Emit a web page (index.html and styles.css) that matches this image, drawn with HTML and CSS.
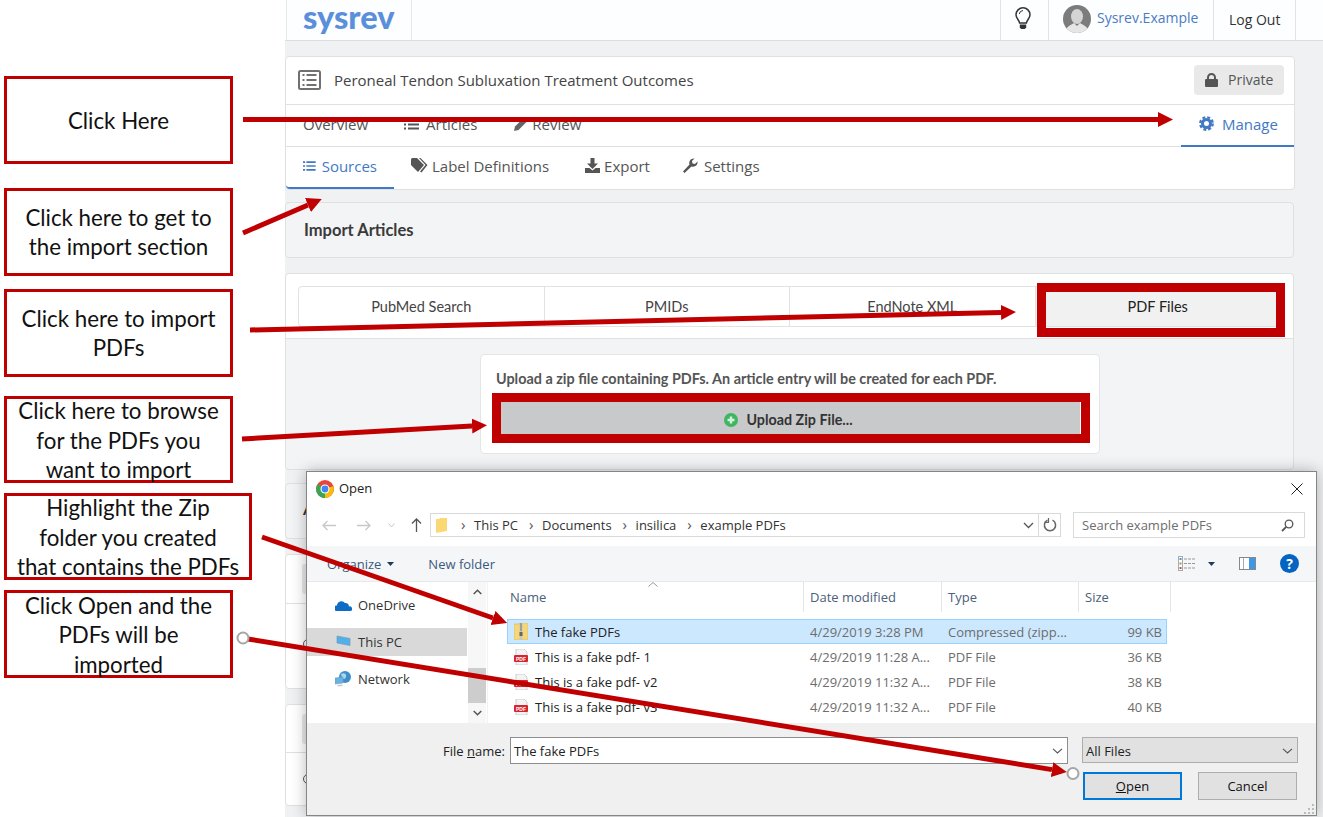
FILE: index.html
```html
<!DOCTYPE html>
<html lang="en">

<head>
    <meta charset="UTF-8">
    <meta name="viewport" content="width=device-width, initial-scale=1.0">
    <title>Import PDFs</title>
    <link rel="stylesheet" href="styles.css">
</head>

<body>
    <div id="page">
        <!-- callouts on the left -->
        <div id="notes">
            <div class="note n1">Click Here</div>
            <div class="note n2">Click here to get to the import section</div>
            <div class="note n3">Click here to import PDFs</div>
            <div class="note n4">Click here to browse for the PDFs you want to import</div>
            <div class="note n5">Highlight the Zip<br>folder you created<br>that contains the PDFs</div>
            <div class="note n6">Click Open and the PDFs will be imported</div>
        </div>

        <!-- the site behind the dialog -->
        <div id="app">
            <div class="navbar">
                <div class="logo">sysrev</div>
                <div class="spacer"></div>
                <div class="cell bulb">
                    <svg width="16" height="24" viewBox="0 0 16 24"><path d="M4.6 16C4.2 13 1 11.500 1 7.800A7 7 0 0 1 15 7.800C15 11.500 11.800 13 11.400 16Z" fill="none" stroke="#333" stroke-width="1.500"/><path d="M8 3.500A4 4 0 0 0 4.300 7" fill="none" stroke="#333"/><path d="M4.800 17.500H11.200V20.500L9.800 22H6.200L4.800 20.500Z" fill="#333"/></svg>
                </div>
                <div class="cell user">
                    <svg class="avatar" width="28" height="28" viewBox="0 0 28 28"><defs><clipPath id="round"><circle cx="14" cy="14" r="14"/></clipPath></defs><g clip-path="url(#round)"><rect width="28" height="28" fill="#7c7c7c"/><ellipse cx="14" cy="11.500" rx="6" ry="7.500" fill="#d4d4d4"/><path d="M2 28C3 21 8 20 11 18L14 21L17 18C20 20 25 21 26 28Z" fill="#e6e6e6"/></g></svg>
                    <span class="username">Sysrev.Example</span>
                </div>
                <div class="cell logout">Log Out</div>
            </div>

            <div class="main">
                <div class="card project">
                    <div class="title-row">
                        <svg width="23" height="20" viewBox="0 0 23 20"><rect x="1" y="1" width="21" height="18" rx="1.500" fill="none" stroke="#707070" stroke-width="2"/><path d="M4.500 5H6.500M8.500 5H18.500M4.500 10H6.500M8.500 10H18.500M4.500 15H6.500M8.500 15H18.500" stroke="#707070" stroke-width="2"/></svg>
                        <span class="project-name">Peroneal Tendon Subluxation Treatment Outcomes</span>
                        <span class="private">
                            <svg width="13" height="14" viewBox="0 0 13 14"><path d="M3 6V4.500A3.500 3.500 0 0 1 10 4.500V6" fill="none" stroke="#555" stroke-width="2"/><rect y="6" width="13" height="8" rx="1" fill="#555"/></svg>
                            Private
                        </span>
                    </div>
                    <div class="tab-row top">
                        <span class="tab">Overview</span>
                        <span class="tab articles">
                            <svg width="15" height="11" viewBox="0 0 15 11"><path d="M0 1.500H2M4 1.500H15M0 5.500H2M4 5.500H15M0 9.500H2M4 9.500H15" stroke="#555" stroke-width="1.800"/></svg>
                            <span class="after-articles">Articles</span>
                        </span>
                        <span class="tab review">
                            <svg width="14" height="14" viewBox="0 0 14 14"><path d="M0 14L1 9.500L9.500 1L13 4.500L4.500 13Z" fill="#666"/><path d="M10.500 0L14 3.500" stroke="#666" stroke-width="1.500"/></svg>
                            <span class="after-small">Review</span>
                        </span>
                        <span class="tab manage">
                            <svg width="15" height="15" viewBox="0 0 15 15"><circle cx="7.500" cy="7.500" r="4" fill="none" stroke="#4279c4" stroke-width="3"/><circle cx="7.500" cy="7.500" r="6.200" fill="none" stroke="#4279c4" stroke-width="2.400" stroke-dasharray="2.900 1.970"/></svg>
                            <span class="after-icon">Manage</span>
                        </span>
                    </div>
                    <div class="tab-row sub">
                        <span class="tab sources">
                            <svg width="15" height="12" viewBox="0 0 15 12"><path d="M0 1.500H2.500M4 1.500H15M0 6H2.500M4 6H15M0 10.500H2.500M4 10.500H15" stroke="#4279c4" stroke-width="2"/></svg>
                            <span class="after-sources">Sources</span>
                        </span>
                        <span class="tab">
                            <svg width="18" height="15" viewBox="0 0 18 15"><path d="M0 1.500A1.500 1.500 0 0 1 1.500 0H6L13 7L7 14L0 7ZM8 0H9.500L16.500 7L10.500 14.500L9 13.500L14.500 7Z" fill="#555"/></svg>
                            <span class="after-tag">Label Definitions</span>
                        </span>
                        <span class="tab export">
                            <svg width="15" height="15" viewBox="0 0 15 15"><path d="M5.500 0H9.500V5.500H13L7.500 11L2 5.500H5.500Z" fill="#555"/><path d="M0 10H4.500L7.500 12.500L10.500 10H15V15H0Z" fill="#555"/></svg>
                            <span class="after-small">Export</span>
                        </span>
                        <span class="tab settings">
                            <svg width="15" height="15" viewBox="0 0 15 15"><path d="M1.500 15L0 13.500L6.500 6.500C5.500 3 8 0 11.500 .500L9 3L9.500 5.500L12 6L14.500 3.500C15 7 12 9.500 8.500 8.500Z" fill="#555"/></svg>
                            <span class="after-wrench">Settings</span>
                        </span>
                    </div>
                </div>

                <div class="panel import-head">Import Articles</div>

                <div class="panel import-box">
                    <div class="source-wrap">
                        <div class="source-tabs">
                            <div class="source">PubMed Search</div>
                            <div class="source">PMIDs</div>
                            <div class="source">EndNote XML</div>
                            <div class="source active">PDF Files</div>
                        </div>
                    </div>
                    <div class="zip-area">
                        <div class="zip-box">
                            <p class="zip-text">Upload a zip file containing PDFs. An article entry will be created for each PDF.</p>
                            <div class="zip-button">
                                <svg width="14" height="14" viewBox="0 0 14 14"><circle cx="7" cy="7" r="7" fill="#3fb55f"/><path d="M7 3.500V10.500M3.500 7H10.500" stroke="#d8f0de" stroke-width="2.400"/></svg>
                                Upload Zip File...
                            </div>
                        </div>
                    </div>
                </div>

                <div class="panel stub s1"><span class="stub-letter">A</span></div>
                <div class="panel stub s2">
                    <div class="stub-top"><i></i></div>
                    <div class="stub-bottom"><b></b></div>
                </div>
                <div class="panel stub s3">
                    <div class="stub-top small"><i></i></div>
                    <div class="stub-bottom"><b></b></div>
                </div>
            </div>
        </div>

        <!-- windows file dialog -->
        <div id="dialog">
            <div class="dlg-title">
                <svg width="18" height="18" viewBox="0 0 18 18"><circle cx="9" cy="9" r="9" fill="#e8453c"/><path d="M9 9L1.500 14C3 16.500 6 18 9 18Z" fill="#34a853"/><path d="M9 9L1.500 14C-.5 10.500 0 7 2 4Z" fill="#34a853"/><path d="M9 9L17.500 6C18.500 10 17 15 12 17.500L9 18Z" fill="#fbbc05"/><circle cx="9" cy="9" r="4.500" fill="#fff"/><circle cx="9" cy="9" r="3.400" fill="#4285f4"/></svg>
                <span class="dlg-name">Open</span>
                <svg class="dlg-close" width="12" height="12" viewBox="0 0 12 12"><path d="M.5 .5L11.500 11.500M11.500 .5L.5 11.500" stroke="#222" stroke-width="1"/></svg>
            </div>

            <div class="dlg-address">
                <div class="nav-arrows">
                    <svg width="14" height="11" viewBox="0 0 14 11"><path d="M14 5.500H1M5.500 1L1 5.500L5.500 10" fill="none" stroke="#c8c8c8" stroke-width="1.300"/></svg>
                    <svg class="fwd" width="14" height="11" viewBox="0 0 14 11"><path d="M0 5.500H13M8.500 1L13 5.500L8.500 10" fill="none" stroke="#c8c8c8" stroke-width="1.300"/></svg>
                    <svg class="down" width="7" height="5" viewBox="0 0 7 5"><path d="M.5 .5L3.500 4L6.500 .5" fill="none" stroke="#c8c8c8"/></svg>
                    <svg class="up" width="11" height="14" viewBox="0 0 11 14"><path d="M5.500 14V1M1 5.500L5.500 1L10 5.500" fill="none" stroke="#555" stroke-width="1.300"/></svg>
                </div>
                <div class="crumbs">
                    <svg class="crumb-folder" width="11" height="15" viewBox="0 0 11 15"><path d="M0 1H3L4 0H11V13L0 15Z" fill="#fbd873"/></svg>
                    <span class="sep">&#8250;</span><span>This PC</span>
                    <span class="sep">&#8250;</span><span>Documents</span>
                    <span class="sep">&#8250;</span><span>insilica</span>
                    <span class="sep">&#8250;</span><span>example PDFs</span>
                    <svg class="crumb-down" width="11" height="7" viewBox="0 0 11 7"><path d="M1 1L5.500 5.500L10 1" fill="none" stroke="#555" stroke-width="1.300"/></svg>
                    <span class="refresh">
                        <svg width="14" height="14" viewBox="0 0 14 14"><path d="M4.500 2.200A5.600 5.600 0 1 0 9.500 2.200" fill="none" stroke="#666" stroke-width="1.500"/><path d="M5.500 0V4.400H1.500" fill="none" stroke="#666" stroke-width="1.200"/></svg>
                    </span>
                </div>
                <div class="search">
                    <span>Search example PDFs</span>
                    <svg width="13" height="13" viewBox="0 0 13 13"><circle cx="8" cy="5" r="3.800" fill="none" stroke="#555" stroke-width="1.300"/><path d="M5.200 7.800L1 12" stroke="#555" stroke-width="1.800"/></svg>
                </div>
            </div>

            <div class="dlg-tools">
                <span class="organize">Organize</span>
                <svg class="caret" width="7" height="4" viewBox="0 0 7 4"><path d="M0 0H7L3.500 4Z" fill="#1d3a5f"/></svg>
                <span class="newfolder">New folder</span>
                <svg class="views" width="17" height="15" viewBox="0 0 17 15"><rect x=".5" y=".5" width="4" height="14" fill="#fff" stroke="#aaa"/><rect x="1.500" y="2" width="2" height="2" fill="#4a90d9"/><rect x="1.500" y="6.500" width="2" height="2" fill="#7da650"/><rect x="1.500" y="11" width="2" height="2" fill="#c0504d"/><path d="M6 3H17M6 7.500H17M6 12H17" stroke="#999" stroke-dasharray="3 1"/></svg>
                <svg class="caret views-caret" width="7" height="4" viewBox="0 0 7 4"><path d="M0 0H7L3.500 4Z" fill="#1d3a5f"/></svg>
                <svg class="pane" width="17" height="13" viewBox="0 0 17 13"><rect x=".5" y=".5" width="16" height="12" fill="#fff" stroke="#888"/><rect x="10" y="1" width="6" height="11" fill="#3f97e6"/><path d="M4.500 1V12" stroke="#aaa"/></svg>
                <span class="help">?</span>
            </div>

            <div class="dlg-body">
                <div class="side">
                    <div class="place">
                        <svg width="17" height="11" viewBox="0 0 17 11"><path d="M1 11A2.800 2.800 0 0 1 2 5.500A4.500 4.500 0 0 1 10 3A3.500 3.500 0 0 1 14 6.500A2.300 2.300 0 0 1 15.500 11Z" fill="#0f6cc4"/></svg>
                        OneDrive
                    </div>
                    <div class="place current">
                        <svg width="17" height="15" viewBox="0 0 17 15"><path d="M2 1L15 3.500V10.500L2 8Z" fill="#4fb0ea" stroke="#7b99b3" stroke-width=".7"/><path d="M0 13L6 11L9 12L3 15Z" fill="#d5d9dd"/></svg>
                        This PC
                    </div>
                    <div class="place">
                        <svg width="17" height="16" viewBox="0 0 17 16"><circle cx="10" cy="6" r="6" fill="#3d8fc9"/><path d="M6 3C9 1 12 3 11 6S7 9 6 3Z" fill="#a9d7ef"/><path d="M0 7L8 6V12L0 13Z" fill="#62b4e6" stroke="#7b99b3" stroke-width=".6"/><path d="M2 14L7 13.500L8 15L3 15.500Z" fill="#c8ccd0"/></svg>
                        Network
                    </div>
                </div>
                <div class="side-scroll">
                    <svg width="9" height="6" viewBox="0 0 9 6"><path d="M.7 5L4.500 1.200L8.300 5" fill="none" stroke="#555" stroke-width="1.500"/></svg>
                    <div class="thumb"></div>
                    <svg width="9" height="6" viewBox="0 0 9 6"><path d="M.7 1L4.500 4.800L8.300 1" fill="none" stroke="#555" stroke-width="1.500"/></svg>
                </div>
                <div class="files">
                    <div class="file-head">
                        <span class="col-name">Name<svg class="sort" width="10" height="5" viewBox="0 0 10 5"><path d="M.5 4.500L5 .5L9.500 4.500" fill="none" stroke="#999"/></svg></span>
                        <span class="col">Date modified</span>
                        <span class="col">Type</span>
                        <span class="col col-size">Size</span>
                    </div>
                    <div class="file selected">
                        <span class="file-name">
                            <svg width="14" height="17" viewBox="0 0 14 17"><path d="M0 1H5V0H14V17H0Z" fill="#f5d67b" stroke="#d7b860" stroke-width=".6"/><rect x="5.500" y="0" width="3" height="17" fill="#c9c9b8"/><path d="M6 1H8M6 3H8M6 5H8M6 7H8" stroke="#777"/><rect x="5.500" y="9" width="3" height="4" fill="#666"/></svg>
                            The fake PDFs
                        </span>
                        <span>4/29/2019 3:28 PM</span><span>Compressed (zipp...</span><span class="num">99 KB</span>
                    </div>
                    <div class="file">
                        <span class="file-name">
                            <svg width="14" height="16" viewBox="0 0 14 16"><path d="M2 0H10L13 3V16H2Z" fill="#f4f4f4" stroke="#bbb" stroke-width=".7"/><rect y="6" width="14" height="7" rx="1" fill="#d9232e"/><text class="pdf-mark" x="7" y="11.500">PDF</text></svg>
                            This is a fake pdf- 1
                        </span>
                        <span>4/29/2019 11:28 A...</span><span>PDF File</span><span class="num">36 KB</span>
                    </div>
                    <div class="file">
                        <span class="file-name">
                            <svg width="14" height="16" viewBox="0 0 14 16"><path d="M2 0H10L13 3V16H2Z" fill="#f4f4f4" stroke="#bbb" stroke-width=".7"/><rect y="6" width="14" height="7" rx="1" fill="#d9232e"/><text class="pdf-mark" x="7" y="11.500">PDF</text></svg>
                            This is a fake pdf- v2
                        </span>
                        <span>4/29/2019 11:32 A...</span><span>PDF File</span><span class="num">38 KB</span>
                    </div>
                    <div class="file">
                        <span class="file-name">
                            <svg width="14" height="16" viewBox="0 0 14 16"><path d="M2 0H10L13 3V16H2Z" fill="#f4f4f4" stroke="#bbb" stroke-width=".7"/><rect y="6" width="14" height="7" rx="1" fill="#d9232e"/><text class="pdf-mark" x="7" y="11.500">PDF</text></svg>
                            This is a fake pdf- v3
                        </span>
                        <span>4/29/2019 11:32 A...</span><span>PDF File</span><span class="num">40 KB</span>
                    </div>
                </div>
            </div>

            <div class="dlg-foot">
                <div class="foot-row">
                    <label class="fname-label">File <u>n</u>ame:</label>
                    <div class="fname">The fake PDFs
                        <svg width="11" height="6" viewBox="0 0 11 6"><path d="M1 .8L5.500 5L10 .8" fill="none" stroke="#555" stroke-width="1.100"/></svg>
                    </div>
                    <div class="ftype">All Files
                        <svg width="11" height="6" viewBox="0 0 11 6"><path d="M1 .8L5.500 5L10 .8" fill="none" stroke="#555" stroke-width="1.100"/></svg>
                    </div>
                </div>
                <div class="foot-row buttons">
                    <div class="btn default"><u>O</u>pen</div>
                    <div class="btn">Cancel</div>
                </div>
                <svg class="grip" width="11" height="11" viewBox="0 0 11 11"><path d="M9 1H11V3H9ZM5 5H7V7H5ZM9 5H11V7H9ZM1 9H3V11H1ZM5 9H7V11H5ZM9 9H11V11H9Z" fill="#bbb"/></svg>
            </div>
        </div>

        <!-- red arrows and outlines on top of everything -->
        <svg id="marks" width="1323" height="817" viewBox="0 0 1323 817">
            <defs>
                <marker id="head" markerUnits="userSpaceOnUse" markerWidth="16" markerHeight="16" refX="0" refY="8" orient="auto">
                    <path d="M0 .5L15 8L0 15.500Z" fill="#c00000"/>
                </marker>
            </defs>
            <rect class="frame" x="1041.500" y="287.500" width="239" height="45"/>
            <rect class="frame" x="496.500" y="397.500" width="589" height="41"/>
            <line class="arrow" x1="243" y1="119.500" x2="1158" y2="119.500"/>
            <line class="arrow" x1="243" y1="233" x2="308" y2="205"/>
            <line class="arrow" x1="250" y1="330" x2="1001" y2="312.400"/>
            <line class="arrow" x1="242" y1="439" x2="472" y2="426"/>
            <line class="arrow" x1="262" y1="537" x2="493" y2="618"/>
            <line class="arrow" x1="248" y1="639" x2="1052" y2="769.600"/>
            <circle class="knob" cx="243" cy="638" r="5.500"/>
            <circle class="knob" cx="1073" cy="773.500" r="5.500"/>
        </svg>
    </div>
</body>

</html>
```

FILE: styles.css
```css
* {
    margin: 0;
    padding: 0;
    box-sizing: border-box;
}

body {
    background: #fff;
    font-family: "Lato", sans-serif;
    overflow: hidden;
}

#page {
    width: 1323px;
    height: 817px;
    position: relative;
    overflow: hidden;
    display: flex;
}

/* callouts */
#notes {
    width: 285px;
    padding-left: 4px;
    flex-shrink: 0;
}

.note {
    width: 229px;
    height: 88px;
    border: 3px solid #c00000;
    display: flex;
    align-items: center;
    justify-content: center;
    text-align: center;
    font-family: "Lato", sans-serif;
    font-size: 22.300px;
    line-height: 29.500px;
    color: #111;
    padding: 0 8px;
}

.n1 { margin-top: 76px; padding-top: 2px; }
.n2 { margin-top: 24px; }
.n3 { margin-top: 13px; }
.n4 { margin-top: 19px; height: 87px; padding: 2px 8px 0; }
.n5 { margin-top: 10px; height: 87px; width: 248px; padding: 2px 0 0; }
.n6 { margin-top: 10px; padding: 2px 16px 0; }

/* site */
#app {
    width: 1038px;
    height: 817px;
    background: #f0f1f3;
    font-family: "Open Sans", sans-serif;
    color: #555;
    overflow: hidden;
}

.navbar {
    height: 41px;
    background: #fdfeff;
    border-bottom: 1px solid #dcdde0;
    display: flex;
}

.logo {
    width: 126px;
    height: 40px;
    padding-left: 16px;
    margin-left: 1px;
    border-left: 1px solid #e6e7e9;
    border-right: 1px solid #e6e7e9;
    color: #5a8fdc;
    font-family: "Lato", sans-serif;
    font-weight: 900;
    font-size: 32.500px;
    line-height: 33px;
}

.spacer {
    flex: 1;
}

.cell {
    height: 40px;
    border-left: 1px solid #e2e3e6;
    display: flex;
    align-items: center;
}

.bulb {
    width: 48px;
    justify-content: center;
    padding: 0 3px 3px 0;
}

.user {
    width: 165px;
    padding-left: 14px;
    padding-bottom: 3px;
}

.avatar {
    flex-shrink: 0;
}

.username {
    margin-left: 6px;
    margin-top: -2px;
    color: #4a7cc4;
    font-size: 14px;
    font-weight: 500;
}

.logout {
    width: 83px;
    margin-right: 27px;
    border-right: 1px solid #e2e3e6;
    padding: 0 0 1px 15px;
    color: #333;
    font-size: 14px;
}

.main {
    padding: 15px 28px 0 0;
}

.card {
    height: 134px;
    background: #fff;
    border: 1px solid #dfe0e2;
    border-radius: 4px;
    margin-bottom: 12px;
}

.title-row {
    height: 48px;
    display: flex;
    align-items: center;
    padding: 0 10px 2px 12px;
    border-bottom: 1px solid #dfe0e2;
}

.project-name {
    margin-left: 13px;
    color: #444;
    font-size: 15px;
    font-weight: 500;
}

.private {
    margin-left: auto;
    width: 90px;
    height: 30px;
    background: #e9e9e9;
    border-radius: 4px;
    display: flex;
    align-items: center;
    padding-left: 11px;
    gap: 10px;
    font-size: 14px;
    color: #555;
}

.tab-row {
    display: flex;
}

.tab-row.top {
    height: 42px;
    border-bottom: 1px solid #dfe0e2;
}

.tab-row.sub {
    height: 42px;
}

.tab {
    display: flex;
    align-items: center;
    padding: 0 17px 3px;
    font-size: 15px;
    color: #555;
}

.tab-row.sub .tab {
    padding-bottom: 5px;
}

.articles { margin-left: 2px; }
.review { margin-left: 3px; }
.export { margin-left: 2px; }
.settings { margin-left: -1px; }

.after-icon { margin-left: 8px; }
.after-articles { margin-left: 7px; }
.after-small { margin-left: 4px; }
.after-sources { margin-left: 6px; }
.after-tag { margin-left: 3px; }
.after-wrench { margin-left: 6px; }

.manage {
    margin-left: auto;
    width: 113px;
    padding: 0 0 3px 18px;
    color: #4279c4;
    border-bottom: 2px solid #4279c4;
    height: 42px;
}

.tab-row.sub .sources {
    color: #4279c4;
    width: 108px;
    padding-bottom: 3px;
    border-bottom: 2px solid #4279c4;
    height: 42px;
    border-bottom-left-radius: 4px;
}

.panel {
    width: 1009px;
    background: #f3f4f6;
    border: 1px solid #dfe0e2;
    border-radius: 4px;
}

.import-head {
    height: 56px;
    margin-bottom: 15px;
    padding: 0 0 1px 18px;
    display: flex;
    align-items: center;
    font-family: "Lato", sans-serif;
    font-weight: 700;
    font-size: 16.500px;
    color: #3a3a3a;
}

.import-box {
    height: 197px;
    margin-bottom: 13px;
}

.source-wrap {
    height: 65px;
    background: #fff;
    border-bottom: 1px solid #dfe0e2;
    padding: 12px 12px 0;
    border-radius: 4px 4px 0 0;
}

.source-tabs {
    height: 41px;
    display: flex;
    border: 1px solid #e2e2e2;
    border-radius: 4px;
}

.source {
    flex: 1;
    display: flex;
    align-items: center;
    justify-content: center;
    font-family: "Lato", sans-serif;
    font-size: 14.500px;
    color: #444;
    border-right: 1px solid #e2e2e2;
}

.source.active {
    background: #f1f1f1;
    color: #222;
    border-right: 0;
}

.zip-area {
    padding: 15px 0 0 1px;
    display: flex;
    justify-content: center;
}

.zip-box {
    width: 620px;
    height: 100px;
    background: #fff;
    border: 1px solid #e4e5e7;
    border-radius: 4px;
    padding: 15px 15px 0;
}

.zip-text {
    font-family: "Lato", sans-serif;
    font-weight: 700;
    font-size: 14.400px;
    line-height: 18px;
    color: #555;
    white-space: nowrap;
}

.zip-button {
    margin-top: 14px;
    margin-left: 5px;
    width: 579px;
    height: 32px;
    padding: 3px 4px 0 0;
    background: #c8c9cb;
    display: flex;
    align-items: center;
    justify-content: center;
    gap: 8px;
    font-family: "Lato", sans-serif;
    font-weight: 700;
    font-size: 14.300px;
    color: #333;
}

.stub {
    background: #fff;
}

.s1 {
    height: 56px;
    background: #f3f4f6;
    margin-bottom: 15px;
    padding: 15px 0 0 17px;
    font-family: "Lato", sans-serif;
    font-weight: 700;
    font-size: 16px;
    color: #333;
}

.s2 {
    height: 135px;
    margin-bottom: 15px;
}

.s3 {
    height: 102px;
}

.stub-top {
    height: 49px;
    padding: 9px 0 0 16px;
    border-bottom: 1px solid #dfe0e2;
}

.stub-top i {
    display: block;
    width: 30px;
    height: 30px;
    background: #e8e8e8;
    border-radius: 3px;
}

.stub-bottom {
    padding: 35px 0 0 17px;
}

.s3 .stub-top {
    height: 48px;
}

.s3 .stub-bottom {
    padding-top: 21px;
}

.stub-bottom b {
    display: block;
    width: 10px;
    height: 10px;
    border: 1px solid #555;
    border-radius: 50%;
}

/* file dialog */
#dialog {
    position: absolute;
    left: 306px;
    top: 471px;
    width: 1011px;
    height: 345px;
    background: #fff;
    border: 1px solid #858585;
    box-shadow: 0 0 14px rgba(0, 0, 0, 0.28);
    font-family: "Open Sans", sans-serif;
    font-size: 13px;
    color: #222;
    display: flex;
    flex-direction: column;
}

.dlg-title {
    height: 34px;
    display: flex;
    align-items: center;
    padding: 0 13px 0 9px;
    flex-shrink: 0;
}

.dlg-name {
    margin-left: 5px;
    margin-top: -2px;
    font-size: 13px;
    color: #222;
}

.dlg-close {
    margin-left: auto;
}

.dlg-address {
    height: 40px;
    padding: 0 0 2px 15px;
    display: flex;
    align-items: center;
    flex-shrink: 0;
}

.nav-arrows {
    width: 108px;
    display: flex;
    align-items: center;
}

.fwd { margin-left: 21px; }
.down { margin-left: 17px; }
.up { margin-left: 16px; }

.crumbs {
    width: 631px;
    height: 24px;
    border: 1px solid #d9d9d9;
    display: flex;
    align-items: center;
    padding-left: 5px;
    color: #333;
}

.crumb-folder {
    margin-right: 14px;
}

.sep {
    color: #555;
    font-size: 15px;
    width: 13px;
    margin-top: -2px;
}

.crumbs span:not(.sep):not(.refresh) {
    margin-right: 11px;
}

.crumb-down {
    margin-left: auto;
    margin-right: 4px;
}

.refresh {
    width: 22px;
    height: 22px;
    border-left: 1px solid #d9d9d9;
    display: flex;
    align-items: center;
    justify-content: center;
}

.search {
    width: 232px;
    height: 26px;
    margin-left: 12px;
    border: 1px solid #d9d9d9;
    display: flex;
    align-items: center;
    justify-content: space-between;
    padding: 0 10px 0 8px;
    color: #6d6d6d;
}

.dlg-tools {
    height: 36px;
    background: #f5f6f7;
    border-bottom: 1px solid #e9e9ea;
    display: flex;
    align-items: center;
    padding-left: 20px;
    color: #3a5a80;
    flex-shrink: 0;
}

.organize { color: #3a5a80; margin-top: 1px; }
.caret { margin-left: 6px; }
.newfolder { margin-left: 34px; margin-top: 1px; }
.views { margin-left: auto; }
.views-caret { margin-left: 13px; }
.pane { margin-left: 24px; }

.help {
    width: 19px;
    height: 19px;
    margin: 0 17px 0 24px;
    border-radius: 50%;
    background: #0563c1;
    color: #fff;
    font-weight: 700;
    font-size: 14px;
    line-height: 19px;
    text-align: center;
}

.dlg-body {
    height: 141px;
    display: flex;
    flex-shrink: 0;
}

.side {
    width: 160px;
    padding-top: 9px;
    display: flex;
    flex-direction: column;
    gap: 9px;
}

.place {
    height: 28px;
    display: flex;
    align-items: center;
    gap: 6px;
    padding-left: 28px;
    color: #333;
}

.place.current {
    background: #d9d9d9;
}

.side-scroll {
    width: 18px;
    margin-left: 1px;
    background: #f7f7f7;
    display: flex;
    flex-direction: column;
    align-items: center;
    padding-top: 7px;
}

.thumb {
    width: 100%;
    height: 35px;
    margin: 73px 0 7px;
    background: #cdcdcd;
}

.files {
    margin-left: 1px;
    flex: 1;
    border-left: 1px solid #f2f2f2;
}

.file-head {
    height: 30px;
    width: 683px;
    display: grid;
    grid-template-columns: 315px 138px 137px 93px;
    align-items: stretch;
    color: #4c607a;
    margin-bottom: 7px;
}

.col-name {
    padding: 6px 0 0 22px;
    position: relative;
}

.sort {
    position: absolute;
    left: 160px;
    top: 0;
}

.col {
    padding: 6px 0 0 6px;
    border-left: 1px solid #e5e5e5;
}

.col-size {
    border-right: 1px solid #e5e5e5;
}

.file {
    width: 660px;
    height: 25px;
    margin-left: 19px;
    display: grid;
    grid-template-columns: 296px 138px 137px 89px;
    align-items: center;
    color: #6d6d6d;
    border: 1px solid transparent;
}

.file.selected {
    background: #cce8ff;
    border-color: #99d1ff;
}

.file > span {
    padding-left: 6px;
    white-space: nowrap;
}

.file .file-name {
    display: flex;
    align-items: center;
    gap: 7px;
    color: #222;
}

.file .num {
    padding: 0 6px 0 0;
    text-align: right;
}

.pdf-mark {
    fill: #fff;
    font-family: "Liberation Sans", sans-serif;
    font-size: 5px;
    font-weight: 700;
    text-anchor: middle;
}

.dlg-foot {
    flex: 1;
    background: #f0f0f0;
    padding-top: 14px;
    position: relative;
}

.foot-row {
    display: flex;
    align-items: flex-start;
}

.fname-label {
    width: 198px;
    height: 27px;
    line-height: 28px;
    text-align: right;
    color: #222;
}

.fname {
    width: 558px;
    height: 27px;
    margin-left: 5px;
    background: #fff;
    border: 1px solid #8e8e8e;
    display: flex;
    align-items: center;
    justify-content: space-between;
    padding: 1px 4px 0 3px;
}

.ftype {
    width: 216px;
    height: 26px;
    margin-left: 14px;
    background: #e1e1e1;
    border: 1px solid #adadad;
    display: flex;
    align-items: center;
    justify-content: space-between;
    padding: 1px 4px 0 3px;
}

.buttons {
    margin-top: 8px;
    padding-right: 19px;
    justify-content: flex-end;
    gap: 16px;
}

.btn {
    width: 99px;
    height: 28px;
    background: #e1e1e1;
    border: 1px solid #adadad;
    display: flex;
    align-items: center;
    justify-content: center;
    color: #111;
}

.btn.default {
    border: 2px solid #0078d7;
}

.grip {
    position: absolute;
    right: 2px;
    bottom: 1px;
}

/* red marks over the page */
#marks {
    position: absolute;
    left: 0;
    top: 0;
}

.frame {
    fill: none;
    stroke: #c00000;
    stroke-width: 9;
}

.arrow {
    stroke: #c00000;
    stroke-width: 5;
    marker-end: url(#head);
}

.knob {
    fill: #fff;
    stroke: #a6a6a6;
    stroke-width: 2;
}
```
